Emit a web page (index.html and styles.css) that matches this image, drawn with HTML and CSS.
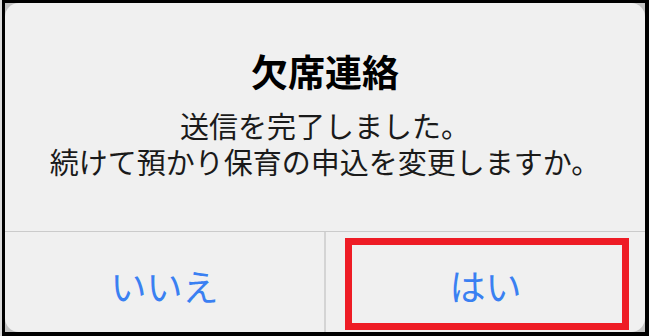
FILE: index.html
```html
<!DOCTYPE html>
<html lang="ja">
<head>
<meta charset="utf-8">
<link rel="stylesheet" href="styles.css">
</head>
<body>
<div class="screen">
  <div class="edge"></div>
  <div class="frame">
    <div class="backdrop">
      <div class="dialog">
        <div class="content">
          <div class="title">欠席連絡</div>
          <div class="message">
            <div>送信を完了しました。</div>
            <div>続けて預かり保育の申込を変更しますか。</div>
          </div>
        </div>
        <div class="actions">
          <div class="action">いいえ</div>
          <div class="action action-right">はい<span class="highlight"></span></div>
        </div>
      </div>
    </div>
  </div>
</div>
</body>
</html>
```
FILE: styles.css
```css
html, body {
  margin: 0;
  padding: 0;
}
body {
  width: 649px;
  height: 336px;
  overflow: hidden;
  font-family: "Noto Sans CJK JP", "Noto Sans", sans-serif;
}
.screen {
  display: flex;
  width: 649px;
  height: 336px;
  background: #000;
}
.edge {
  width: 2px;
  background: #dcdcdc;
}
.frame {
  flex: 1;
  padding: 3px 4px 4px 3px;
  display: flex;
}
.backdrop {
  flex: 1;
  background: #c4c4c4;
  display: flex;
}
.dialog {
  flex: 1;
  background: #f0f0f0;
  border-radius: 14px;
  display: flex;
  flex-direction: column;
}
.content {
  height: 182px;
  padding-top: 46px;
  border-bottom: 1px solid #cbcbcb;
  text-align: center;
}
.title {
  font-size: 37px;
  line-height: 44px;
  font-weight: 700;
  color: #000;
}
.message {
  margin-top: 14px;
  font-size: 29px;
  line-height: 36px;
  color: #1a1a1a;
}
.actions {
  flex: 1;
  display: flex;
}
.action {
  flex: 1;
  display: flex;
  align-items: center;
  justify-content: center;
  padding-top: 6px;
  font-size: 36px;
  color: #3a80f2;
}
.action-right {
  position: relative;
  border-left: 2px solid #d4d4d4;
}
.highlight {
  position: absolute;
  left: 19px;
  top: 6px;
  width: 270px;
  height: 78px;
  border: 7px solid #ee1c25;
}
```
